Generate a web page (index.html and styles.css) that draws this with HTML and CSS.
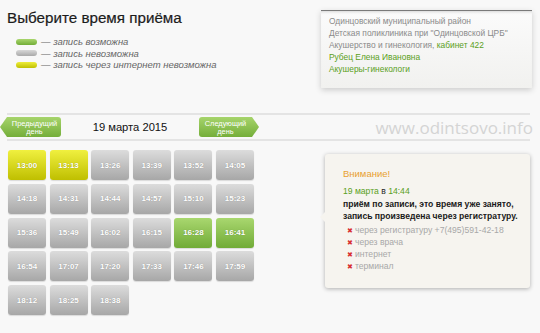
FILE: index.html
```html
<!DOCTYPE html>
<html lang="ru">
<head>
<meta charset="utf-8">
<title>Выберите время приёма</title>
<link rel="stylesheet" href="styles.css">
</head>
<body>
<div class="header">
  <div class="intro">
    <h1 class="title">Выберите время приёма</h1>
    <ul class="legend">
      <li><span class="pill pill-green"></span>— запись возможна</li>
      <li><span class="pill pill-gray"></span>— запись невозможна</li>
      <li><span class="pill pill-yellow"></span>— запись через интернет невозможна</li>
    </ul>
  </div>
  <div class="info">
    <div>Одинцовский муниципальный район</div>
    <div>Детская поликлиника при "Одинцовской ЦРБ"</div>
    <div>Акушерство и гинекология, <span class="green">кабинет 422</span></div>
    <div class="green">Рубец Елена Ивановна</div>
    <div class="green">Акушеры-гинекологи</div>
  </div>
</div>

<div class="nav">
  <a class="navbtn prev">Предыдущий<br>день</a>
  <div class="date">19 марта 2015</div>
  <a class="navbtn next">Следующий<br>день</a>
  <div class="watermark">www.odintsovo.info</div>
</div>

<div class="main">
  <div class="grid">
    <div class="slot yellow">13:00</div>
    <div class="slot yellow">13:13</div>
    <div class="slot">13:26</div>
    <div class="slot">13:39</div>
    <div class="slot">13:52</div>
    <div class="slot">14:05</div>
    <div class="slot">14:18</div>
    <div class="slot">14:31</div>
    <div class="slot">14:44</div>
    <div class="slot">14:57</div>
    <div class="slot">15:10</div>
    <div class="slot">15:23</div>
    <div class="slot">15:36</div>
    <div class="slot">15:49</div>
    <div class="slot">16:02</div>
    <div class="slot">16:15</div>
    <div class="slot green-slot">16:28</div>
    <div class="slot green-slot">16:41</div>
    <div class="slot">16:54</div>
    <div class="slot">17:07</div>
    <div class="slot">17:20</div>
    <div class="slot">17:33</div>
    <div class="slot">17:46</div>
    <div class="slot">17:59</div>
    <div class="slot">18:12</div>
    <div class="slot">18:25</div>
    <div class="slot">18:38</div>
  </div>
  <div class="popup">
    <div class="warn">Внимание!</div>
    <div class="when"><span class="green">19 марта</span> в <span class="green">14:44</span></div>
    <div class="msg">приём по записи, это время уже занято,<br>запись произведена через регистратуру.</div>
    <ul class="ways">
      <li><span class="x">✖</span>через регистратуру +7(495)591-42-18</li>
      <li><span class="x">✖</span>через врача</li>
      <li><span class="x">✖</span>интернет</li>
      <li><span class="x">✖</span>терминал</li>
    </ul>
  </div>
</div>
</body>
</html>
```

FILE: styles.css
```css
* { box-sizing: border-box; }
html, body { margin: 0; padding: 0; }
body {
  width: 540px;
  height: 333px;
  overflow: hidden;
  background: #f8f8f8;
  font-family: "Liberation Sans", Arial, sans-serif;
  color: #222;
}
.green { color: #5aa022; }

.header {
  display: flex;
  justify-content: space-between;
  padding: 0 8px 0 7px;
  height: 100px;
}
.title {
  margin: 8px 0 0 0;
  font-size: 15.2px;
  font-weight: normal;
  line-height: 20px;
  color: #1c1c1c;
  -webkit-text-stroke: 0.2px #1c1c1c;
}
.legend {
  list-style: none;
  margin: 8px 0 0 9px;
  padding: 0;
  font-size: 9.5px;
  font-style: italic;
  color: #666;
}
.legend li {
  display: flex;
  align-items: center;
  height: 11.5px;
}
.pill {
  display: inline-block;
  width: 21px;
  height: 6px;
  border-radius: 3px;
  margin-right: 4px;
}
.pill-green { background: linear-gradient(#a9d66d, #72ad38); }
.pill-gray { background: linear-gradient(#d8d8d8, #a9a9a9); }
.pill-yellow { background: linear-gradient(#eded3c, #c0c000); }

.info {
  margin-top: 10px;
  width: 211px;
  height: 78px;
  padding: 4px 8px;
  background: linear-gradient(#fbfbfb, #f1f1ef);
  border-top: 1px solid #7a7a7a;
  box-shadow: 0 2px 6px rgba(0,0,0,0.18), inset 0 3px 3px -2px rgba(0,0,0,0.15);
  font-size: 8.4px;
  line-height: 12px;
  color: #8a8a8a;
}

.nav {
  margin: 13px 10px 0 7px;
  height: 28px;
  border-top: 2px solid #e4e4e4;
  border-bottom: 2px solid #e4e4e4;
  display: flex;
  align-items: center;
}
.navbtn {
  display: block;
  width: 61px;
  height: 20px;
  padding-top: 2.5px;
  text-align: center;
  font-size: 7.4px;
  line-height: 8px;
  color: #fff;
  background: linear-gradient(#a6d46b, #74ae3a);
}
.prev {
  margin-left: -7px;
  padding-left: 8px;
  border-radius: 0 3px 3px 0;
  clip-path: polygon(7px 0, 100% 0, 100% 100%, 7px 100%, 0 50%);
}
.next {
  width: 60px;
  padding-right: 7px;
  border-radius: 3px 0 0 3px;
  clip-path: polygon(0 0, calc(100% - 7px) 0, 100% 50%, calc(100% - 7px) 100%, 0 100%);
}
.date {
  width: 138px;
  text-align: center;
  font-size: 11.2px;
  color: #111;
}
.watermark {
  margin-left: auto;
  margin-right: -3px;
  font-family: "Open Sans", sans-serif;
  font-size: 17px;
  color: #d4d4d4;
}

.main {
  display: flex;
  align-items: flex-start;
  padding: 9px 0 0 8px;
}
.grid {
  display: grid;
  grid-template-columns: repeat(6, 38px);
  grid-auto-rows: 30px;
  column-gap: 3.6px;
  row-gap: 3.8px;
}
.slot {
  border-radius: 3px;
  background: linear-gradient(#dcdcdc, #a7a7a7);
  box-shadow: 0 1px 1px rgba(0,0,0,0.12);
  color: #fff;
  font-size: 8px;
  font-weight: bold;
  display: flex;
  align-items: center;
  justify-content: center;
  text-shadow: 0 0 1px rgba(0,0,0,0.3);
}
.slot.yellow { background: linear-gradient(#f0f03f, #bfbf00); }
.slot.green-slot { background: linear-gradient(#a9d76f, #71ab37); }

.popup {
  position: relative;
  margin: 4px 0 0 71px;
  width: 205px;
  height: 134px;
  padding: 14px 10px 0 18px;
  background: #f6f4ef;
  border-radius: 3px;
  box-shadow: 0 1px 4px rgba(0,0,0,0.3);
  font-size: 8.6px;
  line-height: 12px;
}
.popup::before {
  content: "";
  position: absolute;
  left: -5px;
  top: 58px;
  border-top: 5px solid transparent;
  border-bottom: 5px solid transparent;
  border-right: 5px solid #f6f4ef;
}
.warn {
  color: #e8a030;
  font-size: 9.5px;
  margin-bottom: 5px;
}
.when { color: #222; margin-bottom: 1px; }
.msg {
  font-weight: bold;
  color: #1a1a1a;
}
.ways {
  list-style: none;
  margin: 2px 0 0 4px;
  padding: 0;
  color: #a8a8a8;
}
.ways li {
  height: 12px;
  line-height: 12px;
}
.x {
  display: inline-block;
  line-height: 1;
  color: #d83030;
  font-size: 7px;
  margin-right: 2px;
}
```
